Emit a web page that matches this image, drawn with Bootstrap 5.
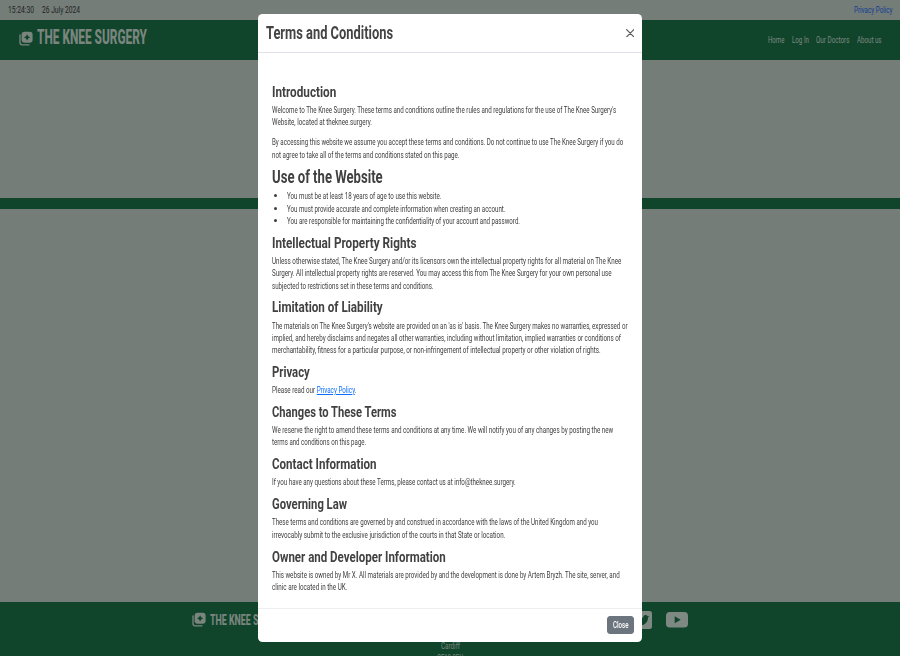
<!DOCTYPE html>
<html lang="en">
<head>
<meta charset="utf-8">
<meta name="viewport" content="width=device-width, initial-scale=1">
<title>The Knee Surgery</title>
<link href="https://cdn.jsdelivr.net/npm/bootstrap@5.3.0/dist/css/bootstrap.min.css" rel="stylesheet">
<style>
body{font-family:Roboto,"Liberation Sans",sans-serif;font-size:9.6px;line-height:12.3px;color:#3d3d3d;background:#757d79;height:100vh;overflow:hidden}
.fit{display:block;white-space:nowrap}
.fit>span{display:inline-block;transform-origin:0 50%;white-space:nowrap}
.topline{height:20px;color:#202322;padding:0 7.5px}
.topline a{color:#123f91}
.green{background:#11452b;color:#7e8983}
.site-nav{height:39.5px;padding:0 18.5px 0 19px}
.brand-box{padding-bottom:4px}
.brand-box svg{margin-top:2px}
.brand-name{font-size:19.6px;line-height:24px;font-weight:800;color:#7b8580}
.foot-name{font-size:14.6px;line-height:18px;font-weight:800;color:#7b8580}
.hero{height:138px}
.stripe{height:11.5px}
.page-foot{height:54px;color:#7b8580}
.foot-row{height:38px;padding:0 212px 3px 192px}
.modal-dialog{width:384px;max-width:384px;margin:14px auto 0}
.modal-content{height:628px;border:0;border-radius:4.5px;color:inherit}
.modal-header{height:39px;padding:0 8px;border-color:#dee2e6}
.modal-title{font-size:18.4px;line-height:24px;font-weight:700;color:#444}
.x-btn{width:8.5px;height:8.5px;opacity:.65}
.modal-body{padding:30.6px 13.5px 0}
.modal-body h2,.modal-body h3{font-size:15px;line-height:16.8px;font-weight:700;margin:0 0 3.3px;color:#414141}
.modal-body h2{font-size:17.6px;line-height:19.2px;margin-bottom:2.7px}
.modal-body p,.modal-body ul{margin:0 0 7.6px}
.modal-body p:first-of-type{margin-bottom:8px}
.modal-body ul{padding-left:15.3px}
.modal-footer{height:34.2px;padding:0 8px;border-color:#eceef0}
.modal-footer>*{margin:0}
.close-btn{font-size:9.6px;font-weight:500;line-height:12.3px;width:27px;height:18px;padding:0;border-radius:3px}
</style>
</head>
<body class="d-flex flex-column">
<div class="topline d-flex align-items-center justify-content-between">
  <div class="d-flex gap-2"><span class="fit" data-w="26"><span>15:24:30</span></span><span class="fit" data-w="38"><span>26 July 2024</span></span></div>
  <a href="#" class="text-decoration-none fit" data-w="38.5"><span>Privacy Policy</span></a>
</div>
<nav class="green site-nav d-flex align-items-center justify-content-between flex-shrink-0">
  <div class="brand-box d-flex align-items-center">
    <svg class="me-1" width="14" height="15" viewBox="0 0 14 15"><path d="M1 4v7.600A2.200 2.200 0 0 0 3.200 13.800H10" fill="none" stroke="#7b8580" stroke-width="1.300" stroke-linecap="round"/><rect x="2.600" y=".8" width="11" height="11" rx="3" fill="#7b8580"/><path d="M8.100 3.200 9.200 5.200 11.200 6.300 9.200 7.400 8.100 9.400 7 7.400 5 6.300 7 5.200z" fill="#11452b"/></svg>
    <span class="fit brand-name" data-w="110"><span>THE KNEE SURGERY</span></span>
  </div>
  <div class="d-flex" style="column-gap:7.5px">
    <span class="fit" data-w="16.500"><span>Home</span></span><span class="fit" data-w="17"><span>Log In</span></span><span class="fit" data-w="33.500"><span>Our Doctors</span></span><span class="fit" data-w="24.500"><span>About us</span></span>
  </div>
</nav>
<div class="hero flex-shrink-0"></div>
<div class="green stripe flex-shrink-0"></div>
<main class="flex-grow-1"></main>
<footer class="green page-foot flex-shrink-0 overflow-hidden">
  <div class="foot-row d-flex align-items-center justify-content-between">
    <div class="d-flex align-items-center">
      <svg class="me-1" width="14" height="15" viewBox="0 0 14 15"><path d="M1 4v7.600A2.200 2.200 0 0 0 3.200 13.800H10" fill="none" stroke="#7b8580" stroke-width="1.300" stroke-linecap="round"/><rect x="2.600" y=".8" width="11" height="11" rx="3" fill="#7b8580"/><path d="M8.100 3.200 9.200 5.200 11.200 6.300 9.200 7.400 8.100 9.400 7 7.400 5 6.300 7 5.200z" fill="#11452b"/></svg>
      <span class="fit foot-name" data-w="82"><span>THE KNEE SURGERY</span></span>
    </div>
    <div class="d-flex align-items-center" style="column-gap:14px">
      <svg width="18" height="18" viewBox="0 0 18 18"><rect width="18" height="18" rx="2.500" fill="#7e8983"/><path d="M3 13c5 3 11 0 11-6.500L15.300 5l-1.700.3C12.500 3 8.700 4 9.200 6.700 7 6.700 5 5.700 3.500 4c-.8 1.500-.3 3 .8 3.800l-1-.3c0 1.500 1 2.300 2.200 2.700h-1c.4 1 1.200 1.600 2.300 1.700C5.800 12.700 4.500 13 3 13z" fill="#11452b"/></svg>
      <svg width="22" height="16" viewBox="0 0 22 16"><rect width="22" height="15.500" rx="3.800" fill="#7e8983"/><path d="M8.700 4.300v6.900l6-3.450z" fill="#11452b"/></svg>
    </div>
  </div>
  <div class="d-flex flex-column align-items-center">
    <span class="fit" data-w="19"><span>Cardiff</span></span><span class="fit" data-w="26"><span>CF10 3EU</span></span>
  </div>
</footer>

<div class="modal show d-block overflow-hidden" tabindex="-1">
<div class="modal-dialog"><div class="modal-content">
  <div class="modal-header">
    <h1 class="modal-title fit" data-w="127"><span>Terms and Conditions</span></h1>
    <svg class="x-btn" viewBox="0 0 9 9" role="button" aria-label="Close"><path d="M.7.700l7.600 7.600M8.300.700.700 8.300" stroke="#000" stroke-width="1.300" stroke-linecap="round"/></svg>
  </div>
  <div class="modal-body">
    <h3 class="fit" data-w="64.300"><span>Introduction</span></h3>
    <p><span class="fit" data-w="344.300"><span>Welcome to The Knee Surgery. These terms and conditions outline the rules and regulations for the use of The Knee Surgery's</span></span>
    <span class="fit" data-w="100"><span>Website, located at theknee.surgery.</span></span></p>
    <p><span class="fit" data-w="351.300"><span>By accessing this website we assume you accept these terms and conditions. Do not continue to use The Knee Surgery if you do</span></span>
    <span class="fit" data-w="187.500"><span>not agree to take all of the terms and conditions stated on this page.</span></span></p>
    <h2 class="fit" data-w="110.700"><span>Use of the Website</span></h2>
    <ul>
      <li><span class="fit" data-w="154.500"><span>You must be at least 18 years of age to use this website.</span></span></li>
      <li><span class="fit" data-w="218.500"><span>You must provide accurate and complete information when creating an account.</span></span></li>
      <li><span class="fit" data-w="233"><span>You are responsible for maintaining the confidentiality of your account and password.</span></span></li>
    </ul>
    <h3 class="fit" data-w="144.500"><span>Intellectual Property Rights</span></h3>
    <p><span class="fit" data-w="349.300"><span>Unless otherwise stated, The Knee Surgery and/or its licensors own the intellectual property rights for all material on The Knee</span></span>
    <span class="fit" data-w="339.500"><span>Surgery. All intellectual property rights are reserved. You may access this from The Knee Surgery for your own personal use</span></span>
    <span class="fit" data-w="161.500"><span>subjected to restrictions set in these terms and conditions.</span></span></p>
    <h3 class="fit" data-w="110.700"><span>Limitation of Liability</span></h3>
    <p><span class="fit" data-w="355.500"><span>The materials on The Knee Surgery's website are provided on an 'as is' basis. The Knee Surgery makes no warranties, expressed or</span></span>
    <span class="fit" data-w="349"><span>implied, and hereby disclaims and negates all other warranties, including without limitation, implied warranties or conditions of</span></span>
    <span class="fit" data-w="328.700"><span>merchantability, fitness for a particular purpose, or non-infringement of intellectual property or other violation of rights.</span></span></p>
    <h3 class="fit" data-w="37.800"><span>Privacy</span></h3>
    <p><span class="fit" data-w="84.400"><span>Please read our <a href="#">Privacy Policy</a>.</span></span></p>
    <h3 class="fit" data-w="124.500"><span>Changes to These Terms</span></h3>
    <p><span class="fit" data-w="341.300"><span>We reserve the right to amend these terms and conditions at any time. We will notify you of any changes by posting the new</span></span>
    <span class="fit" data-w="94.200"><span>terms and conditions on this page.</span></span></p>
    <h3 class="fit" data-w="104.500"><span>Contact Information</span></h3>
    <p><span class="fit" data-w="243.700"><span>If you have any questions about these Terms, please contact us at info@theknee.surgery.</span></span></p>
    <h3 class="fit" data-w="75"><span>Governing Law</span></h3>
    <p><span class="fit" data-w="326"><span>These terms and conditions are governed by and construed in accordance with the laws of the United Kingdom and you</span></span>
    <span class="fit" data-w="233.300"><span>irrevocably submit to the exclusive jurisdiction of the courts in that State or location.</span></span></p>
    <h3 class="fit" data-w="173.700"><span>Owner and Developer Information</span></h3>
    <p><span class="fit" data-w="347.700"><span>This website is owned by Mr X. All materials are provided by and the development is done by Artem Bryzh. The site, server, and</span></span>
    <span class="fit" data-w="75.300"><span>clinic are located in the UK.</span></span></p>
  </div>
  <div class="modal-footer"><button class="btn btn-secondary close-btn d-flex justify-content-center align-items-center"><span class="fit" data-w="15.500"><span>Close</span></span></button></div>
</div></div>
</div>
<script src="https://cdn.jsdelivr.net/npm/bootstrap@5.3.0/dist/js/bootstrap.bundle.min.js"></script>
<script>
// Condense each line horizontally to its set width.
document.querySelectorAll('.fit').forEach(function (el) {
  var w = parseFloat(el.dataset.w), t = el.firstElementChild;
  var natural = t.getBoundingClientRect().width;
  el.style.width = w + 'px';
  t.style.transform = 'scaleX(' + (w / natural) + ')';
});
</script>
</body>
</html>
